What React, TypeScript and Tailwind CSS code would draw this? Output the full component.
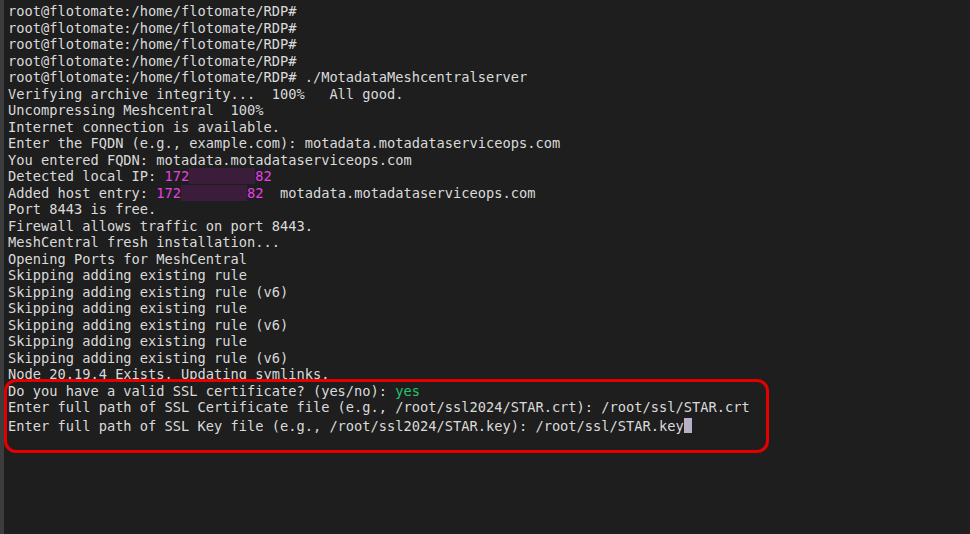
import React from "react";

const prompt = "root@flotomate:/home/flotomate/RDP#";

function Redacted({ n }: { n: number }) {
  return <span className="bg-[#3b1d3b] text-transparent">{"\u00a0".repeat(n)}</span>;
}

export default function App() {
  const plain = [
    prompt,
    prompt,
    prompt,
    prompt,
    `${prompt} ./MotadataMeshcentralserver`,
    "Verifying archive integrity...  100%   All good.",
    "Uncompressing Meshcentral  100%",
    "Internet connection is available.",
    "Enter the FQDN (e.g., example.com): motadata.motadataserviceops.com",
    "You entered FQDN: motadata.motadataserviceops.com",
  ];
  const after = [
    "Port 8443 is free.",
    "Firewall allows traffic on port 8443.",
    "MeshCentral fresh installation...",
    "Opening Ports for MeshCentral",
    "Skipping adding existing rule",
    "Skipping adding existing rule (v6)",
    "Skipping adding existing rule",
    "Skipping adding existing rule (v6)",
    "Skipping adding existing rule",
    "Skipping adding existing rule (v6)",
    "Node 20.19.4 Exists. Updating symlinks.",
  ];

  return (
    <div className="flex h-[534px] w-[970px] overflow-hidden bg-[#1e1e1e]">
      <div className="w-[4px] shrink-0 bg-[#3c3c3c]" />
      <div className="relative flex-1">
        <pre
          className="whitespace-pre pl-[4px] pt-[3px] text-[13.7px] leading-[16.5px] text-[#dadada]"
          style={{ fontFamily: '"DejaVu Sans Mono", monospace' }}
        >
          {plain.map((l, i) => (
            <div key={i}>{l}</div>
          ))}
          <div>
            Detected local IP: <span className="text-[#e83ee8]">172</span>
            <Redacted n={8} />
            <span className="text-[#e83ee8]">82</span>
          </div>
          <div>
            Added host entry: <span className="text-[#e83ee8]">172</span>
            <Redacted n={8} />
            <span className="text-[#e83ee8]">82</span>
            {"  motadata.motadataserviceops.com"}
          </div>
          {after.map((l, i) => (
            <div key={i}>{l}</div>
          ))}
          <div>
            Do you have a valid SSL certificate? (yes/no): <span className="text-[#23c26b]">yes</span>
          </div>
          <div>Enter full path of SSL Certificate file (e.g., /root/ssl2024/STAR.crt): /root/ssl/STAR.crt</div>
          <div>
            Enter full path of SSL Key file (e.g., /root/ssl2024/STAR.key): /root/ssl/STAR.key
            <span className="inline-block h-[15px] w-[8px] translate-y-[2px] bg-[#b6b1c6]" />
          </div>
        </pre>
        <div className="absolute left-0 top-[379px] h-[74px] w-[765px] rounded-[12px] border-[3px] border-[#e50000]" />
      </div>
    </div>
  );
}
